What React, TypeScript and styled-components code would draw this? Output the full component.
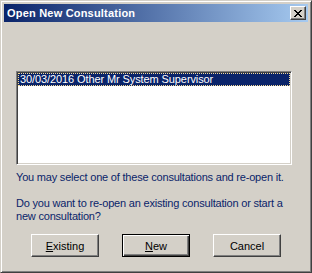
import React from "react";
import styled, { createGlobalStyle } from "styled-components";

const GlobalStyle = createGlobalStyle`
  html, body {
    margin: 0;
    padding: 0;
    background: #d4d0c8;
  }
  body {
    font-family: "Liberation Sans", Arial, sans-serif;
    font-size: 11px;
  }
`;

const Window = styled.div`
  width: 312px;
  height: 273px;
  box-sizing: border-box;
  background: #d4d0c8;
  border: 1px solid;
  border-color: #d4d0c8 #404040 #404040 #d4d0c8;
  box-shadow: inset 1px 1px #ffffff, inset -1px -1px #808080;
  padding: 3px;
  display: flex;
  flex-direction: column;
`;

const TitleBar = styled.div`
  height: 18px;
  display: flex;
  align-items: center;
  justify-content: space-between;
  padding: 0 2px 0 3px;
  background: linear-gradient(to right, #0a246a, #a6caf0);
`;

const Title = styled.span`
  color: #ffffff;
  font-weight: bold;
  font-size: 11px;
  letter-spacing: 0.2px;
`;

const CloseButton = styled.div`
  width: 16px;
  height: 14px;
  box-sizing: border-box;
  background: #d4d0c8;
  border: 1px solid;
  border-color: #ffffff #404040 #404040 #ffffff;
  box-shadow: inset -1px -1px #808080;
  display: flex;
  align-items: center;
  justify-content: center;
`;

const Body = styled.div`
  flex: 1;
  display: flex;
  flex-direction: column;
  padding: 49px 16px 0 12px;
`;

const ListBox = styled.div`
  height: 94px;
  box-sizing: border-box;
  background: #ffffff;
  border: 1px solid;
  border-color: #808080 #ffffff #ffffff #808080;
  box-shadow: inset 1px 1px #404040, inset -1px -1px #d4d0c8;
  padding: 1px;
`;

const ListItem = styled.div<{ $selected?: boolean }>`
  height: 13px;
  line-height: 13px;
  padding-left: 2px;
  white-space: nowrap;
  letter-spacing: -0.1px;
  color: ${(p) => (p.$selected ? "#ffffff" : "#000000")};
  background: ${(p) => (p.$selected ? "#0a246a" : "transparent")};
  outline: ${(p) => (p.$selected ? "1px dotted #f5db95" : "none")};
  outline-offset: -1px;
`;

const Message = styled.p<{ $gap: number }>`
  margin: ${(p) => p.$gap}px 0 0;
  line-height: 13px;
  white-space: nowrap;
  letter-spacing: -0.2px;
  color: #0a246a;
`;

const ButtonRow = styled.div`
  display: flex;
  gap: 23px;
  padding-left: 15px;
  margin-top: 11px;
`;

const Button = styled.div<{ $default?: boolean }>`
  width: 68px;
  height: 23px;
  box-sizing: border-box;
  display: flex;
  align-items: center;
  justify-content: center;
  color: #000000;
  background: #d4d0c8;
  border: 1px solid;
  border-color: ${(p) =>
    p.$default ? "#000000" : "#ffffff #404040 #404040 #ffffff"};
  box-shadow: ${(p) =>
    p.$default
      ? "inset 1px 1px #ffffff, inset -1px -1px #404040, inset -2px -2px #808080"
      : "inset -1px -1px #808080"};
`;

const Accel = styled.span`
  text-decoration: underline;
`;

export default function App() {
  return (
    <>
      <GlobalStyle />
      <Window>
        <TitleBar>
          <Title>Open New Consultation</Title>
          <CloseButton>
            <svg width="8" height="7" viewBox="0 0 8 7">
              <path
                d="M0 0h2v1h1v1h2V1h1V0h2v1H7v1H6v1H5v1h1v1h1v1h1v1H6V6H5V5H3v1H2v1H0V6h1V5h1V4h1V3H2V2H1V1H0z"
                fill="#000"
              />
            </svg>
          </CloseButton>
        </TitleBar>
        <Body>
          <ListBox>
            <ListItem $selected>30/03/2016 Other Mr System Supervisor</ListItem>
          </ListBox>
          <Message $gap={6}>
            You may select one of these consultations and re-open it.
          </Message>
          <Message $gap={13}>
            Do you want to re-open an existing consultation or start a
            <br />
            new consultation?
          </Message>
          <ButtonRow>
            <Button>
              <span>
                <Accel>E</Accel>xisting
              </span>
            </Button>
            <Button $default>
              <span>
                <Accel>N</Accel>ew
              </span>
            </Button>
            <Button>Cancel</Button>
          </ButtonRow>
        </Body>
      </Window>
    </>
  );
}
